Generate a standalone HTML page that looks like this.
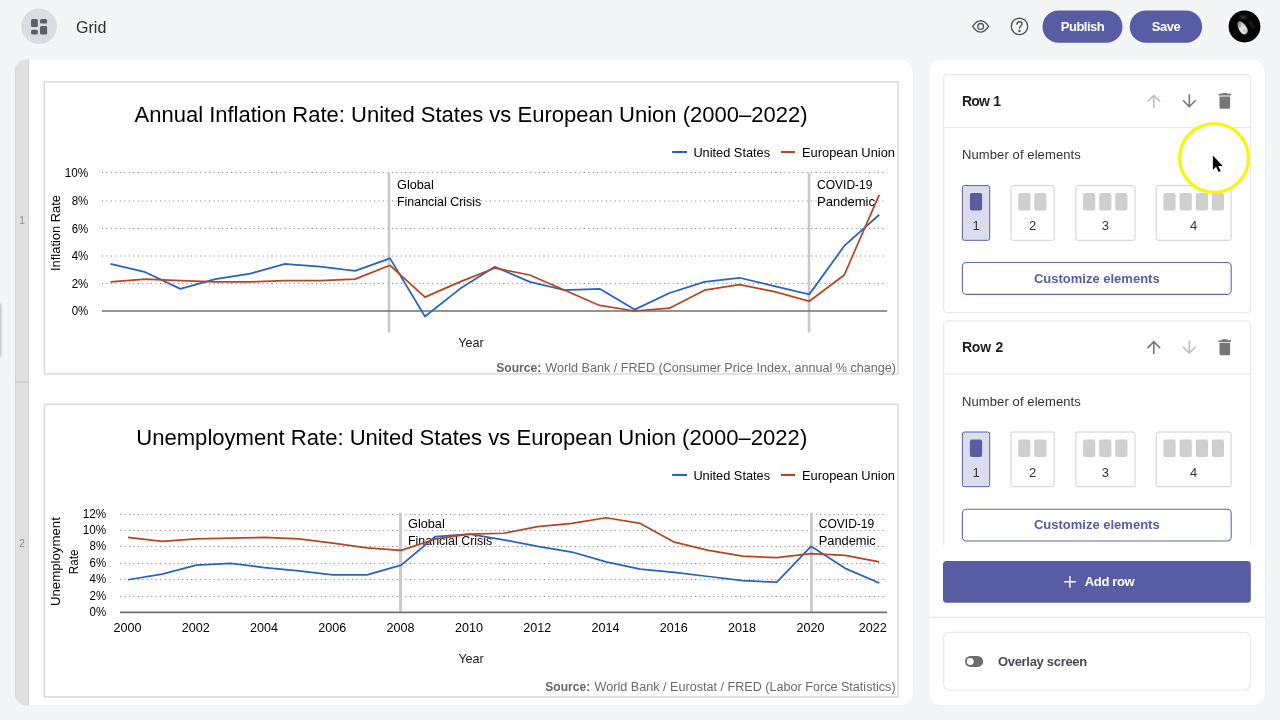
<!DOCTYPE html>
<html lang="en"><head><meta charset="utf-8"><title>Grid</title>
<style>
*{box-sizing:border-box;margin:0;padding:0}
html,body{width:1280px;height:720px;overflow:hidden}
body{background:#f3f5f7;font-family:"Liberation Sans", sans-serif;position:relative;color:#222}
#app{position:absolute;left:0;top:0;width:1280px;height:720px;will-change:transform}
.abs{position:absolute}
.t{position:absolute;white-space:nowrap;line-height:1}
.title{left:76px;top:19.9px;font-size:16px;color:#2e2e33;letter-spacing:.05px}
.pill{position:absolute;top:10.6px;height:32px;color:#fff;font-weight:700;font-size:13px;text-align:center;line-height:32px;letter-spacing:-.5px}
.clip{position:absolute;left:0;top:0;width:1280px;height:545.4px;overflow:hidden}
.rowt{font-size:14px;font-weight:700;color:#1f1f23;letter-spacing:-.8px;word-spacing:1px}
.lbl{font-size:13px;color:#333;letter-spacing:.1px}
.num{width:20px;text-align:center;font-size:13px;color:#333}
.custt{width:269.6px;text-align:center;color:#585ca3;font-weight:700;font-size:13px}
svg text{font-family:"Liberation Sans", sans-serif}
</style></head>
<body><div id="app">
<!-- top bar -->
<svg class="abs" style="left:18px;top:6px" width="42" height="42" viewBox="18 6 42 42"><circle cx="39.05" cy="26.4" r="17.8" fill="#dbdce1"/></svg>
<svg class="abs" style="left:29px;top:17px" width="20" height="20" viewBox="29 17 20 20" fill="#5b5e64">
<rect x="31" y="19" width="6.8" height="7.9" rx="1.5"/><rect x="40" y="19" width="7.1" height="4.6" rx="1.5"/>
<rect x="31" y="29.7" width="6.8" height="4.7" rx="1.5"/><rect x="40" y="26" width="7.1" height="8.4" rx="1.5"/></svg>
<div class="t title">Grid</div>
<svg class="abs" style="left:968px;top:14px" width="66" height="26" viewBox="968 14 66 26" fill="none" stroke="#55565b" stroke-width="1.35">
<path d="M972.7 26.4 C975.5 22 978.2 20.7 980.65 20.7 C983.1 20.7 985.8 22 988.6 26.4 C985.8 30.8 983.1 32.1 980.65 32.1 C978.2 32.1 975.5 30.8 972.7 26.4 Z"/>
<circle cx="980.65" cy="26.4" r="2.9"/>
<circle cx="1019.5" cy="26.4" r="8.2"/>
<path d="M1016.9 24.2 C1016.9 22.6 1018 21.7 1019.5 21.7 C1021 21.7 1022.1 22.6 1022.1 24 C1022.1 25.8 1019.5 26 1019.5 28.2" stroke-linecap="round"/>
<circle cx="1019.5" cy="30.9" r="0.55" fill="#55565b"/>
</svg>
<svg class="abs" style="left:1040px;top:8px" width="166" height="38" viewBox="1040 8 166 38"><rect x="1042.5" y="10.6" width="80" height="32.1" rx="16.05" fill="#585ca3"/><rect x="1129.75" y="10.6" width="72.35" height="32.1" rx="16.05" fill="#585ca3"/></svg>
<div class="pill" style="left:1042.5px;width:80px">Publish</div>
<div class="pill" style="left:1129.8px;width:72.3px">Save</div>
<svg class="abs" style="left:1228px;top:10px" width="34" height="34" viewBox="1228 10 34 34">
<defs><clipPath id="av"><circle cx="1244.5" cy="26.5" r="15.9"/></clipPath>
<radialGradient id="fc" cx="50%" cy="62%" r="62%"><stop offset="0" stop-color="#ececec"/><stop offset=".55" stop-color="#d4d4d4"/><stop offset="1" stop-color="#8a8a8a"/></radialGradient>
<filter id="bl" x="-50%" y="-50%" width="200%" height="200%"><feGaussianBlur stdDeviation=".55"/></filter><filter id="bl2" x="-100%" y="-100%" width="300%" height="300%"><feGaussianBlur stdDeviation="1"/></filter></defs>
<circle cx="1244.5" cy="26.5" r="15.9" fill="#050505"/>
<g clip-path="url(#av)">
<ellipse cx="1243.3" cy="17.2" rx="3.6" ry="1.1" fill="#4a4a4a" filter="url(#bl2)" transform="rotate(4 1243.3 17.2)"/>
<ellipse cx="1251.5" cy="24.5" rx="1.6" ry="4.6" fill="#242424" filter="url(#bl2)" transform="rotate(-28 1251.5 24.5)"/>
<ellipse cx="1236" cy="33" rx="1.5" ry="2.5" fill="#1c1c1c" filter="url(#bl2)"/>
<path d="M1237.6 22.9 C1237.8 21.6 1238.8 21 1240.4 21.2 C1242.4 21.6 1244.6 24 1246.2 26.6 C1247.4 28.4 1248.2 30 1247.7 31.8 C1247.2 33.4 1246 34.5 1244.4 34.5 C1242.6 34.4 1240.9 32.8 1239.7 31 C1238.3 28.6 1237.2 25.2 1237.6 22.9 Z" fill="url(#fc)" filter="url(#bl)"/>
<ellipse cx="1240" cy="26.1" rx="1.5" ry=".8" fill="#8a8a8a" filter="url(#bl)" transform="rotate(-20 1240 26.1)"/>
<ellipse cx="1243.6" cy="30.6" rx="1.4" ry=".6" fill="#a5a5a5" filter="url(#bl)" transform="rotate(-25 1243.6 30.6)"/>
</g></svg>

<!-- canvas + panel backgrounds -->
<svg class="abs" style="left:0;top:0" width="1280" height="720" viewBox="0 0 1280 720">
<defs><filter id="sh" x="-400%" y="-20%" width="900%" height="140%"><feGaussianBlur stdDeviation=".9"/></filter><clipPath id="cv"><rect x="15" y="59.2" width="898.3" height="646.2" rx="12"/></clipPath></defs>
<rect x="-1.5" y="303.5" width="2.6" height="53" rx="1" fill="#b4b4b4" filter="url(#sh)"/>
<rect x="15" y="59.2" width="898.3" height="646.2" rx="12" fill="#fff" stroke="#eceef1" stroke-width=".8"/>
<g clip-path="url(#cv)">
<rect x="15" y="59" width="14" height="647" fill="#e0e0e0"/>
<rect x="15" y="59" width="1" height="647" fill="#d6d6d6"/><rect x="28" y="59" width="1" height="647" fill="#d6d6d6"/>
<rect x="15" y="381.2" width="14" height="1.7" fill="#cdcdcd"/>
</g>
<text x="22" y="224.2" font-size="10" text-anchor="middle" fill="#8a8a8a">1</text>
<text x="22" y="547.1" font-size="10" text-anchor="middle" fill="#8a8a8a">2</text>
<rect x="928.7" y="59.2" width="336.6" height="646.2" rx="12" fill="#fff" stroke="#eceef1" stroke-width=".8"/>
</svg>
<svg class="abs" style="left:0;top:0" width="928" height="720" viewBox="0 0 928 720">
<defs><clipPath id="c1"><rect x="44" y="81" width="854" height="293.4"/></clipPath></defs>
<rect x="44.4" y="81.75" width="853.7" height="292.15" fill="#fff" stroke="#dcdcdc" stroke-width="1.6"/>
<text x="471" y="122.3" font-size="22" text-anchor="middle" font-weight="400" fill="#000" textLength="673" lengthAdjust="spacingAndGlyphs">Annual Inflation Rate: United States vs European Union (2000–2022)</text>
<line x1="672.1" x2="687" y1="152" y2="152" stroke="#2863be" stroke-width="2.1"/>
<text x="693.4" y="156.7" font-size="13" text-anchor="start" font-weight="400" fill="#000" textLength="76.7" lengthAdjust="spacingAndGlyphs">United States</text>
<line x1="780.9" x2="795.1" y1="152" y2="152" stroke="#b64526" stroke-width="2.1"/>
<text x="802" y="156.7" font-size="13" text-anchor="start" font-weight="400" fill="#000" textLength="93" lengthAdjust="spacingAndGlyphs">European Union</text>
<line x1="102" x2="887" y1="283.50" y2="283.50" stroke="#7e7e7e" stroke-width="1" stroke-dasharray="1 3.46"/>
<line x1="102" x2="887" y1="256.00" y2="256.00" stroke="#7e7e7e" stroke-width="1" stroke-dasharray="1 3.46"/>
<line x1="102" x2="887" y1="228.50" y2="228.50" stroke="#7e7e7e" stroke-width="1" stroke-dasharray="1 3.46"/>
<line x1="102" x2="887" y1="201.00" y2="201.00" stroke="#7e7e7e" stroke-width="1" stroke-dasharray="1 3.46"/>
<line x1="102" x2="887" y1="172.50" y2="172.50" stroke="#7e7e7e" stroke-width="1" stroke-dasharray="1 3.46"/>
<text x="88.3" y="315.2" font-size="12.3" text-anchor="end" font-weight="400" fill="#000" textLength="16.6" lengthAdjust="spacingAndGlyphs">0%</text>
<text x="88.3" y="287.7" font-size="12.3" text-anchor="end" font-weight="400" fill="#000" textLength="16.6" lengthAdjust="spacingAndGlyphs">2%</text>
<text x="88.3" y="260.2" font-size="12.3" text-anchor="end" font-weight="400" fill="#000" textLength="16.6" lengthAdjust="spacingAndGlyphs">4%</text>
<text x="88.3" y="232.7" font-size="12.3" text-anchor="end" font-weight="400" fill="#000" textLength="16.6" lengthAdjust="spacingAndGlyphs">6%</text>
<text x="88.3" y="205.2" font-size="12.3" text-anchor="end" font-weight="400" fill="#000" textLength="16.6" lengthAdjust="spacingAndGlyphs">8%</text>
<text x="88.3" y="176.7" font-size="12.3" text-anchor="end" font-weight="400" fill="#000" textLength="23.5" lengthAdjust="spacingAndGlyphs">10%</text>
<line x1="389" x2="389" y1="172.7" y2="332.5" stroke="#c8c8c8" stroke-width="2.6"/>
<line x1="809" x2="809" y1="172.7" y2="332.5" stroke="#c8c8c8" stroke-width="2.6"/>
<text x="397" y="188.75" font-size="12" text-anchor="start" font-weight="400" fill="#000" textLength="36.75" lengthAdjust="spacingAndGlyphs">Global</text>
<text x="397" y="205.5" font-size="12" text-anchor="start" font-weight="400" fill="#000" textLength="84.25" lengthAdjust="spacingAndGlyphs">Financial Crisis</text>
<text x="817" y="188.75" font-size="12" text-anchor="start" font-weight="400" fill="#000" textLength="55.5" lengthAdjust="spacingAndGlyphs">COVID-19</text>
<text x="817" y="205.5" font-size="12" text-anchor="start" font-weight="400" fill="#000" textLength="58" lengthAdjust="spacingAndGlyphs">Pandemic</text>
<line x1="102" x2="887" y1="311.0" y2="311.0" stroke="#707070" stroke-width="1.7"/>
<path d="M110.50 263.91 L145.44 272.22 L180.38 288.84 L215.32 279.14 L250.26 273.61 L285.20 263.91 L320.14 266.68 L355.08 270.83 L390.02 258.37 L424.96 316.54 L459.90 288.84 L494.84 266.68 L529.78 281.92 L564.72 290.23 L599.66 288.84 L634.60 309.62 L669.54 293.00 L704.48 281.92 L739.42 277.76 L774.36 286.07 L809.30 294.38 L844.24 245.91 L879.18 214.74" fill="none" stroke="#2863be" stroke-width="1.75" stroke-linejoin="round"/>
<path d="M110.50 281.92 L145.44 279.14 L180.38 280.53 L215.32 281.92 L250.26 281.92 L285.20 280.53 L320.14 280.53 L355.08 279.14 L390.02 265.30 L424.96 297.15 L459.90 281.92 L494.84 268.06 L529.78 274.99 L564.72 290.23 L599.66 305.46 L634.60 311.00 L669.54 308.23 L704.48 290.23 L739.42 284.69 L774.36 291.61 L809.30 301.31 L844.24 274.99 L879.18 194.94" fill="none" stroke="#b64526" stroke-width="1.75" stroke-linejoin="round"/>
<text transform="translate(60.4 233) rotate(-90)" font-size="13" text-anchor="middle" textLength="76" lengthAdjust="spacingAndGlyphs">Inflation Rate</text>
<text x="471" y="346.7" font-size="13" text-anchor="middle" font-weight="400" fill="#222" textLength="25.4" lengthAdjust="spacingAndGlyphs">Year</text>
<g clip-path="url(#c1)">
<text x="496.2" y="371.6" font-size="12.5" text-anchor="start" font-weight="700" fill="#666" textLength="45" lengthAdjust="spacingAndGlyphs">Source:</text>
<text x="545.3" y="371.6" font-size="12.5" text-anchor="start" font-weight="400" fill="#6a6a6a" textLength="350.7" lengthAdjust="spacingAndGlyphs">World Bank / FRED (Consumer Price Index, annual % change)</text>
</g>
<rect x="44.4" y="404.4" width="853.7" height="292.5" fill="#fff" stroke="#dcdcdc" stroke-width="1.6"/>
<text x="471.75" y="445.25" font-size="22" text-anchor="middle" font-weight="400" fill="#000" textLength="671" lengthAdjust="spacingAndGlyphs">Unemployment Rate: United States vs European Union (2000–2022)</text>
<line x1="672.1" x2="687" y1="474.95" y2="474.95" stroke="#2863be" stroke-width="2.1"/>
<text x="693.4" y="479.65" font-size="13" text-anchor="start" font-weight="400" fill="#000" textLength="76.7" lengthAdjust="spacingAndGlyphs">United States</text>
<line x1="780.9" x2="795.1" y1="474.95" y2="474.95" stroke="#b64526" stroke-width="2.1"/>
<text x="802" y="479.65" font-size="13" text-anchor="start" font-weight="400" fill="#000" textLength="93" lengthAdjust="spacingAndGlyphs">European Union</text>
<line x1="120" x2="887" y1="596.50" y2="596.50" stroke="#7e7e7e" stroke-width="1" stroke-dasharray="1 3.46"/>
<line x1="120" x2="887" y1="579.50" y2="579.50" stroke="#7e7e7e" stroke-width="1" stroke-dasharray="1 3.46"/>
<line x1="120" x2="887" y1="563.50" y2="563.50" stroke="#7e7e7e" stroke-width="1" stroke-dasharray="1 3.46"/>
<line x1="120" x2="887" y1="546.50" y2="546.50" stroke="#7e7e7e" stroke-width="1" stroke-dasharray="1 3.46"/>
<line x1="120" x2="887" y1="530.50" y2="530.50" stroke="#7e7e7e" stroke-width="1" stroke-dasharray="1 3.46"/>
<line x1="120" x2="887" y1="514.50" y2="514.50" stroke="#7e7e7e" stroke-width="1" stroke-dasharray="1 3.46"/>
<text x="106.2" y="616.2" font-size="12.3" text-anchor="end" font-weight="400" fill="#000" textLength="16.6" lengthAdjust="spacingAndGlyphs">0%</text>
<text x="106.2" y="600.3" font-size="12.3" text-anchor="end" font-weight="400" fill="#000" textLength="16.6" lengthAdjust="spacingAndGlyphs">2%</text>
<text x="106.2" y="583.3" font-size="12.3" text-anchor="end" font-weight="400" fill="#000" textLength="16.6" lengthAdjust="spacingAndGlyphs">4%</text>
<text x="106.2" y="567.3" font-size="12.3" text-anchor="end" font-weight="400" fill="#000" textLength="16.6" lengthAdjust="spacingAndGlyphs">6%</text>
<text x="106.2" y="550.3" font-size="12.3" text-anchor="end" font-weight="400" fill="#000" textLength="16.6" lengthAdjust="spacingAndGlyphs">8%</text>
<text x="106.2" y="534.3" font-size="12.3" text-anchor="end" font-weight="400" fill="#000" textLength="23.5" lengthAdjust="spacingAndGlyphs">10%</text>
<text x="106.2" y="518.3" font-size="12.3" text-anchor="end" font-weight="400" fill="#000" textLength="23.5" lengthAdjust="spacingAndGlyphs">12%</text>
<line x1="400.5" x2="400.5" y1="512.7" y2="611.6" stroke="#cbcbcb" stroke-width="3"/>
<line x1="811.4" x2="811.4" y1="512.7" y2="611.6" stroke="#cbcbcb" stroke-width="2.8"/>
<text x="408" y="528.25" font-size="12" text-anchor="start" font-weight="400" fill="#000" textLength="36.75" lengthAdjust="spacingAndGlyphs">Global</text>
<text x="408" y="545" font-size="12" text-anchor="start" font-weight="400" fill="#000" textLength="84.25" lengthAdjust="spacingAndGlyphs">Financial Crisis</text>
<text x="818.75" y="528.25" font-size="12" text-anchor="start" font-weight="400" fill="#000" textLength="55.5" lengthAdjust="spacingAndGlyphs">COVID-19</text>
<text x="818.75" y="545" font-size="12" text-anchor="start" font-weight="400" fill="#000" textLength="57" lengthAdjust="spacingAndGlyphs">Pandemic</text>
<line x1="120" x2="887" y1="612.4" y2="612.4" stroke="#707070" stroke-width="1.7"/>
<path d="M128.00 579.76 L162.15 574.05 L196.30 565.07 L230.45 563.44 L264.60 567.52 L298.75 570.78 L332.90 574.86 L367.05 574.86 L401.20 565.07 L435.35 536.51 L469.50 534.06 L503.65 539.78 L537.80 546.30 L571.95 552.02 L606.10 561.81 L640.25 569.15 L674.40 572.42 L708.55 576.50 L742.70 580.58 L776.85 582.21 L811.00 546.30 L845.15 568.34 L879.30 583.02" fill="none" stroke="#2863be" stroke-width="1.75" stroke-linejoin="round"/>
<path d="M128.00 537.33 L162.15 541.41 L196.30 538.96 L230.45 538.14 L264.60 537.33 L298.75 538.96 L332.90 543.04 L367.05 547.94 L401.20 550.38 L435.35 538.96 L469.50 534.06 L503.65 533.25 L537.80 526.72 L571.95 523.46 L606.10 517.74 L640.25 523.46 L674.40 542.22 L708.55 550.38 L742.70 556.10 L776.85 557.73 L811.00 553.65 L845.15 555.28 L879.30 561.81" fill="none" stroke="#b64526" stroke-width="1.75" stroke-linejoin="round"/>
<text x="127.4" y="631.8" font-size="12.6" text-anchor="middle" font-weight="400" fill="#000" textLength="28" lengthAdjust="spacingAndGlyphs">2000</text>
<text x="195.7" y="631.8" font-size="12.6" text-anchor="middle" font-weight="400" fill="#000" textLength="28" lengthAdjust="spacingAndGlyphs">2002</text>
<text x="264.0" y="631.8" font-size="12.6" text-anchor="middle" font-weight="400" fill="#000" textLength="28" lengthAdjust="spacingAndGlyphs">2004</text>
<text x="332.3" y="631.8" font-size="12.6" text-anchor="middle" font-weight="400" fill="#000" textLength="28" lengthAdjust="spacingAndGlyphs">2006</text>
<text x="400.6" y="631.8" font-size="12.6" text-anchor="middle" font-weight="400" fill="#000" textLength="28" lengthAdjust="spacingAndGlyphs">2008</text>
<text x="468.9" y="631.8" font-size="12.6" text-anchor="middle" font-weight="400" fill="#000" textLength="28" lengthAdjust="spacingAndGlyphs">2010</text>
<text x="537.2" y="631.8" font-size="12.6" text-anchor="middle" font-weight="400" fill="#000" textLength="28" lengthAdjust="spacingAndGlyphs">2012</text>
<text x="605.5" y="631.8" font-size="12.6" text-anchor="middle" font-weight="400" fill="#000" textLength="28" lengthAdjust="spacingAndGlyphs">2014</text>
<text x="673.8" y="631.8" font-size="12.6" text-anchor="middle" font-weight="400" fill="#000" textLength="28" lengthAdjust="spacingAndGlyphs">2016</text>
<text x="742.1" y="631.8" font-size="12.6" text-anchor="middle" font-weight="400" fill="#000" textLength="28" lengthAdjust="spacingAndGlyphs">2018</text>
<text x="810.4" y="631.8" font-size="12.6" text-anchor="middle" font-weight="400" fill="#000" textLength="28" lengthAdjust="spacingAndGlyphs">2020</text>
<text x="886.7" y="631.8" font-size="12.6" text-anchor="end" font-weight="400" fill="#000" textLength="28" lengthAdjust="spacingAndGlyphs">2022</text>
<text transform="translate(59.75 561.6) rotate(-90)" font-size="13" text-anchor="middle" textLength="89" lengthAdjust="spacingAndGlyphs">Unemployment</text>
<text transform="translate(77.5 561.9) rotate(-90)" font-size="13" text-anchor="middle" textLength="24.75" lengthAdjust="spacingAndGlyphs">Rate</text>
<text x="471.1" y="662.5" font-size="13" text-anchor="middle" font-weight="400" fill="#222" textLength="25.4" lengthAdjust="spacingAndGlyphs">Year</text>
<text x="545.2" y="690.8" font-size="12.5" text-anchor="start" font-weight="700" fill="#666" textLength="45" lengthAdjust="spacingAndGlyphs">Source:</text>
<text x="594.6" y="690.8" font-size="12.5" text-anchor="start" font-weight="400" fill="#6a6a6a" textLength="301" lengthAdjust="spacingAndGlyphs">World Bank / Eurostat / FRED (Labor Force Statistics)</text>
</svg>

<!-- right panel -->
<div class="clip">
<svg class="abs" style="left:0;top:0" width="1280" height="720" viewBox="0 0 1280 720">
<rect x="943.6" y="74.55" width="306.8" height="238.15" rx="4" fill="#fff" stroke="#e7e9ed" stroke-width="1.2"/>
<line x1="944" x2="1250" y1="127.50" y2="127.50" stroke="#e7e9ed" stroke-width="1.2"/>
<path d="M1153.8 107.70 V95.30 M1147.50 101.70 L1153.8 95.30 L1160.10 101.70" fill="none" stroke="#bdbdbd" stroke-width="1.6"/>
<path d="M1189.35 94.30 V106.70 M1183.05 100.30 L1189.35 106.70 L1195.65 100.30" fill="none" stroke="#757575" stroke-width="1.6"/>
<g transform="translate(1214.2 90.25) scale(0.885)" fill="#757575"><path d="M6 19c0 1.1.9 2 2 2h8c1.1 0 2-.9 2-2V7H6v12zM19 4h-3.5l-1-1h-5l-1 1H5v2h14V4z"/></g>
<rect x="962.4" y="185.60" width="27.30" height="54.7" rx="2" fill="#dddcec" stroke="#5b5fa6"/>
<rect x="969.9" y="193.00" width="12.2" height="17.6" rx="2" fill="#585ca3"/>
<rect x="1010.9" y="185.60" width="43.30" height="54.7" rx="2" fill="#fff" stroke="#d1d1d1"/>
<rect x="1018.2" y="193.00" width="12.2" height="17.6" rx="2" fill="#cfcfcf"/>
<rect x="1034.3" y="193.00" width="12.2" height="17.6" rx="2" fill="#cfcfcf"/>
<rect x="1075.85" y="185.60" width="59.15" height="54.7" rx="2" fill="#fff" stroke="#d1d1d1"/>
<rect x="1083.1" y="193.00" width="12.2" height="17.6" rx="2" fill="#cfcfcf"/>
<rect x="1099.2" y="193.00" width="12.2" height="17.6" rx="2" fill="#cfcfcf"/>
<rect x="1115.25" y="193.00" width="12.2" height="17.6" rx="2" fill="#cfcfcf"/>
<rect x="1156.2" y="185.60" width="74.90" height="54.7" rx="2" fill="#fff" stroke="#d1d1d1"/>
<rect x="1163.4" y="193.00" width="12.2" height="17.6" rx="2" fill="#cfcfcf"/>
<rect x="1179.6" y="193.00" width="12.2" height="17.6" rx="2" fill="#cfcfcf"/>
<rect x="1195.8" y="193.00" width="12.2" height="17.6" rx="2" fill="#cfcfcf"/>
<rect x="1211.8" y="193.00" width="12.2" height="17.6" rx="2" fill="#cfcfcf"/>
<rect x="962.4" y="262.50" width="268.8" height="31.9" rx="4" fill="#fff" stroke="#6468ab" stroke-width="1.1"/>
<rect x="943.6" y="320.95" width="306.8" height="238.15" rx="4" fill="#fff" stroke="#e7e9ed" stroke-width="1.2"/>
<line x1="944" x2="1250" y1="373.90" y2="373.90" stroke="#e7e9ed" stroke-width="1.2"/>
<path d="M1153.8 354.10 V341.70 M1147.50 348.10 L1153.8 341.70 L1160.10 348.10" fill="none" stroke="#757575" stroke-width="1.6"/>
<path d="M1189.35 340.70 V353.10 M1183.05 346.70 L1189.35 353.10 L1195.65 346.70" fill="none" stroke="#bdbdbd" stroke-width="1.6"/>
<g transform="translate(1214.2 336.65) scale(0.885)" fill="#757575"><path d="M6 19c0 1.1.9 2 2 2h8c1.1 0 2-.9 2-2V7H6v12zM19 4h-3.5l-1-1h-5l-1 1H5v2h14V4z"/></g>
<rect x="962.4" y="432.00" width="27.30" height="54.7" rx="2" fill="#dddcec" stroke="#5b5fa6"/>
<rect x="969.9" y="439.40" width="12.2" height="17.6" rx="2" fill="#585ca3"/>
<rect x="1010.9" y="432.00" width="43.30" height="54.7" rx="2" fill="#fff" stroke="#d1d1d1"/>
<rect x="1018.2" y="439.40" width="12.2" height="17.6" rx="2" fill="#cfcfcf"/>
<rect x="1034.3" y="439.40" width="12.2" height="17.6" rx="2" fill="#cfcfcf"/>
<rect x="1075.85" y="432.00" width="59.15" height="54.7" rx="2" fill="#fff" stroke="#d1d1d1"/>
<rect x="1083.1" y="439.40" width="12.2" height="17.6" rx="2" fill="#cfcfcf"/>
<rect x="1099.2" y="439.40" width="12.2" height="17.6" rx="2" fill="#cfcfcf"/>
<rect x="1115.25" y="439.40" width="12.2" height="17.6" rx="2" fill="#cfcfcf"/>
<rect x="1156.2" y="432.00" width="74.90" height="54.7" rx="2" fill="#fff" stroke="#d1d1d1"/>
<rect x="1163.4" y="439.40" width="12.2" height="17.6" rx="2" fill="#cfcfcf"/>
<rect x="1179.6" y="439.40" width="12.2" height="17.6" rx="2" fill="#cfcfcf"/>
<rect x="1195.8" y="439.40" width="12.2" height="17.6" rx="2" fill="#cfcfcf"/>
<rect x="1211.8" y="439.40" width="12.2" height="17.6" rx="2" fill="#cfcfcf"/>
<rect x="962.4" y="509.30" width="268.8" height="31.7" rx="4" fill="#fff" stroke="#6468ab" stroke-width="1.1"/>
</svg>
<div class="t num" style="left:966.05px;top:219.40px">1</div>
<div class="t num" style="left:1022.55px;top:219.40px">2</div>
<div class="t num" style="left:1095.42px;top:219.40px">3</div>
<div class="t num" style="left:1183.65px;top:219.40px">4</div>
<div class="t rowt" style="left:962px;top:93.60px">Row 1</div>
<div class="t lbl" style="left:962px;top:147.90px">Number of elements</div>
<div class="t custt" style="left:962px;top:271.70px">Customize elements</div>
<div class="t num" style="left:966.05px;top:465.80px">1</div>
<div class="t num" style="left:1022.55px;top:465.80px">2</div>
<div class="t num" style="left:1095.42px;top:465.80px">3</div>
<div class="t num" style="left:1183.65px;top:465.80px">4</div>
<div class="t rowt" style="left:962px;top:340.00px;letter-spacing:-.25px">Row 2</div>
<div class="t lbl" style="left:962px;top:395.10px">Number of elements</div>
<div class="t custt" style="left:962px;top:518.10px">Customize elements</div>
</div>
<svg class="abs" style="left:928px;top:550px" width="352" height="170" viewBox="928 550 352 170">
<rect x="943" y="560.9" width="307.8" height="41.8" rx="3.5" fill="#585ca3"/>
<path d="M1069.9 575.9 v11.8 M1064 581.8 h11.8" stroke="#fff" stroke-width="1.4" fill="none"/>
<line x1="928.8" x2="1264.8" y1="617.4" y2="617.4" stroke="#e7e9ed" stroke-width="1.2"/>
<rect x="943.6" y="632.4" width="306.8" height="57.6" rx="6" fill="#fff" stroke="#e7e9ed" stroke-width="1.2"/>
<rect x="965" y="656" width="18.1" height="10.9" rx="5.45" fill="#6c6c6c"/>
<circle cx="970.3" cy="661.45" r="3.45" fill="#fff"/>
</svg>
<div class="t" style="left:1084.8px;top:575.4px;font-size:13px;font-weight:700;color:#fff;letter-spacing:-.35px">Add row</div>
<div class="t" style="left:997.9px;top:655.2px;font-size:13px;font-weight:700;color:#4a4b52;letter-spacing:-.3px">Overlay screen</div>

<!-- cursor highlight -->
<svg class="abs" style="left:1170px;top:112px" width="90" height="90" viewBox="1170 112 90 90">
<circle cx="1214.05" cy="157.95" r="34.4" fill="#fff" stroke="#f8f40a" stroke-width="3.2"/>
<path d="M1212.9 155.4 l0 14.3 l3.2 -3 l2.4 5.4 l2.2 -1 l-2.4 -5.2 l4.4 0 Z" fill="#000" stroke="#fff" stroke-width="1.3" stroke-linejoin="round" paint-order="stroke"/>
</svg>
</div></body></html>
